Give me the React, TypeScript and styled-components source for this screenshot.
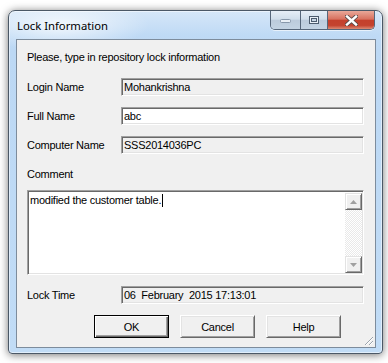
import styled, { createGlobalStyle } from 'styled-components';

const GlobalStyle = createGlobalStyle`
  html, body {
    margin: 0;
    padding: 0;
    background: #ffffff;
  }
  body {
    font-family: 'Liberation Sans', Arial, sans-serif;
    font-size: 11px;
    letter-spacing: -0.25px;
    color: #000;
  }
`;

const Page = styled.div`
  padding: 10px 0 0 8px;
  width: 388px;
  height: 363px;
  box-sizing: border-box;
  overflow: hidden;
`;

const Window = styled.div`
  width: 375px;
  height: 344px;
  box-sizing: border-box;
  display: flex;
  flex-direction: column;
  padding: 0 6px 5px 7px;
  border: 1px solid #4b5866;
  border-radius: 7px 7px 4px 4px;
  background: radial-gradient(
      ellipse 90px 26px at 50px 14px,
      rgba(255, 255, 255, 0.75),
      rgba(255, 255, 255, 0) 100%
    ),
    linear-gradient(to bottom, #d6e7f8 0px, #bfdaf5 24px, #bcd8f4 40px, #c1dcf6 100%);
  box-shadow: 0 0 0 1px rgba(255, 255, 255, 0.5) inset, 0 1px 8px rgba(0, 0, 0, 0.55);
`;

const TitleBar = styled.div`
  height: 28px;
  display: flex;
  justify-content: space-between;
  align-items: flex-start;
  flex-shrink: 0;
`;

const Title = styled.div`
  font-family: 'Noto Sans', 'Open Sans', sans-serif;
  font-size: 11.3px;
  letter-spacing: 0;
  line-height: 16px;
  padding: 7px 0 0 1px;
  color: #000;
`;

const CaptionGroup = styled.div`
  display: flex;
  margin-right: 1px;
  border: 1px solid #56667a;
  border-top: none;
  border-radius: 0 0 5px 5px;
  overflow: hidden;
  box-shadow: 0 1px 0 rgba(255, 255, 255, 0.6);
`;

const CaptionButton = styled.div<{ $w: number; $close?: boolean }>`
  width: ${({ $w }) => $w}px;
  height: 18px;
  display: flex;
  align-items: center;
  justify-content: center;
  border-left: 1px solid #56667a;
  &:first-child {
    border-left: none;
  }
  background: ${({ $close }) =>
    $close
      ? 'linear-gradient(to bottom, #e9a899 0%, #d8715f 45%, #c4402c 52%, #c4432f 80%, #dc8a74 100%)'
      : 'linear-gradient(to bottom, #e6eef7 0%, #d1deeb 45%, #bccbdc 52%, #c3d3e3 100%)'};
`;

const Client = styled.div`
  flex: 1;
  position: relative;
  background: #f0f0f0;
  border: 1px solid #7d8c9c;
  padding: 11px 0 0 10px;
  display: flex;
  flex-direction: column;
`;

const Heading = styled.div`
  line-height: 13px;
`;

const Fields = styled.div`
  display: flex;
  flex-direction: column;
  gap: 11px;
  margin-top: 14px;
`;

const Row = styled.div<{ $top?: number }>`
  display: flex;
  align-items: center;
  margin-top: ${({ $top }) => $top ?? 0}px;
`;

const Label = styled.div`
  width: 94px;
  line-height: 13px;
`;

const Field = styled.div<{ $editable?: boolean }>`
  width: 243px;
  height: 18px;
  box-sizing: border-box;
  border: 1px solid;
  border-color: #a0a0a0 #ffffff #ffffff #a0a0a0;
  box-shadow: inset 1px 1px 0 #696969, inset -1px -1px 0 #e3e3e3;
  background: ${({ $editable }) => ($editable ? '#ffffff' : '#f0f0f0')};
  padding: 0 0 0 2px;
  line-height: 16px;
  white-space: pre;
`;

const CommentLabel = styled.div`
  line-height: 13px;
  margin-top: 14px;
`;

const CommentBox = styled.div`
  margin-top: 9px;
  width: 337px;
  height: 85px;
  box-sizing: border-box;
  border: 1px solid;
  border-color: #a0a0a0 #ffffff #ffffff #a0a0a0;
  box-shadow: inset 1px 1px 0 #696969, inset -1px -1px 0 #e3e3e3;
  background: #ffffff;
  display: flex;
  padding: 2px 1px 1px 2px;
`;

const CommentText = styled.div`
  flex: 1;
  line-height: 13px;
  padding-top: 1px;
`;

const Caret = styled.span`
  display: inline-block;
  width: 0;
  height: 13px;
  border-left: 1px solid #000;
  vertical-align: -3px;
  margin-left: 1px;
`;

const ScrollBar = styled.div`
  width: 17px;
  display: flex;
  flex-direction: column;
  justify-content: space-between;
  background-color: #f4f4f4;
  background-image: conic-gradient(#e9e9e9 25%, #ffffff 0 50%, #e9e9e9 0 75%, #ffffff 0);
  background-size: 2px 2px;
`;

const ArrowButton = styled.div`
  width: 17px;
  height: 17px;
  box-sizing: border-box;
  background: #f0f0f0;
  border: 1px solid;
  border-color: #e3e3e3 #696969 #696969 #e3e3e3;
  box-shadow: inset 1px 1px 0 #ffffff, inset -1px -1px 0 #a0a0a0;
  display: flex;
  align-items: center;
  justify-content: center;
`;

const ButtonRow = styled.div`
  display: flex;
  gap: 11px;
  margin-top: 11px;
  padding-left: 67px;
`;

const Button = styled.div<{ $default?: boolean }>`
  width: 75px;
  height: 23px;
  box-sizing: border-box;
  display: flex;
  align-items: center;
  justify-content: center;
  background: #f0f0f0;
  border: 1px solid;
  border-color: ${({ $default }) => ($default ? '#000000' : '#ffffff #696969 #696969 #ffffff')};
  box-shadow: ${({ $default }) =>
    $default
      ? 'inset 1px 1px 0 #ffffff, inset -1px -1px 0 #696969, inset -2px -2px 0 #a0a0a0'
      : 'inset 1px 1px 0 #e3e3e3, inset -1px -1px 0 #a0a0a0'};
`;

const Grip = styled.svg`
  position: absolute;
  right: 1px;
  bottom: 1px;
`;

const Arrow = ({ up }: { up?: boolean }) => (
  <svg width="7" height="4" viewBox="0 0 7 4">
    <path d={up ? 'M3.5 0 L7 4 L0 4 Z' : 'M0 0 L7 0 L3.5 4 Z'} fill="#a0a0a0" />
  </svg>
);

const App = () => {
  return (
    <>
      <GlobalStyle />
      <Page>
        <Window>
          <TitleBar>
            <Title>Lock Information</Title>
            <CaptionGroup>
              <CaptionButton $w={29}>
                <svg width="11" height="5" viewBox="0 0 11 5">
                  <rect x="0.5" y="1.5" width="10" height="3" rx="1" fill="#e9eff6" stroke="#8797aa" />
                </svg>
              </CaptionButton>
              <CaptionButton $w={26}>
                <svg width="10" height="8" viewBox="0 0 10 8">
                  <rect x="0.5" y="0.5" width="9" height="7" fill="#e9eff6" stroke="#4d5c6e" />
                  <rect x="2.5" y="2.5" width="5" height="3" fill="#c9d6e4" stroke="#4d5c6e" />
                </svg>
              </CaptionButton>
              <CaptionButton $w={46} $close>
                <svg width="13" height="11" viewBox="0 0 13 11">
                  <path
                    d="M2 1.5 L11 9.5 M11 1.5 L2 9.5"
                    stroke="#5a4a48"
                    strokeWidth="4.2"
                    strokeLinecap="square"
                  />
                  <path
                    d="M2 1.5 L11 9.5 M11 1.5 L2 9.5"
                    stroke="#ffffff"
                    strokeWidth="2.4"
                    strokeLinecap="square"
                  />
                </svg>
              </CaptionButton>
            </CaptionGroup>
          </TitleBar>
          <Client>
            <Heading>Please, type in repository lock information</Heading>
            <Fields>
              <Row>
                <Label>Login Name</Label>
                <Field>Mohankrishna</Field>
              </Row>
              <Row>
                <Label>Full Name</Label>
                <Field $editable>abc</Field>
              </Row>
              <Row>
                <Label>Computer Name</Label>
                <Field>SSS2014036PC</Field>
              </Row>
            </Fields>
            <CommentLabel>Comment</CommentLabel>
            <CommentBox>
              <CommentText>
                modified the customer table.
                <Caret />
              </CommentText>
              <ScrollBar>
                <ArrowButton>
                  <Arrow up />
                </ArrowButton>
                <ArrowButton>
                  <Arrow />
                </ArrowButton>
              </ScrollBar>
            </CommentBox>
            <Row $top={11}>
              <Label>Lock Time</Label>
              <Field>{'06  February  2015 17:13:01'}</Field>
            </Row>
            <ButtonRow>
              <Button $default>OK</Button>
              <Button>Cancel</Button>
              <Button>Help</Button>
            </ButtonRow>
            <Grip width="12" height="12" viewBox="0 0 12 12">
              <path d="M11 3 L3 11 M11 7 L7 11 M11 11 L11 11" stroke="#9aa3ac" strokeWidth="1" />
              <path d="M11 4 L4 11 M11 8 L8 11" stroke="#ffffff" strokeWidth="1" />
            </Grip>
          </Client>
        </Window>
      </Page>
    </>
  );
};

export default App;
